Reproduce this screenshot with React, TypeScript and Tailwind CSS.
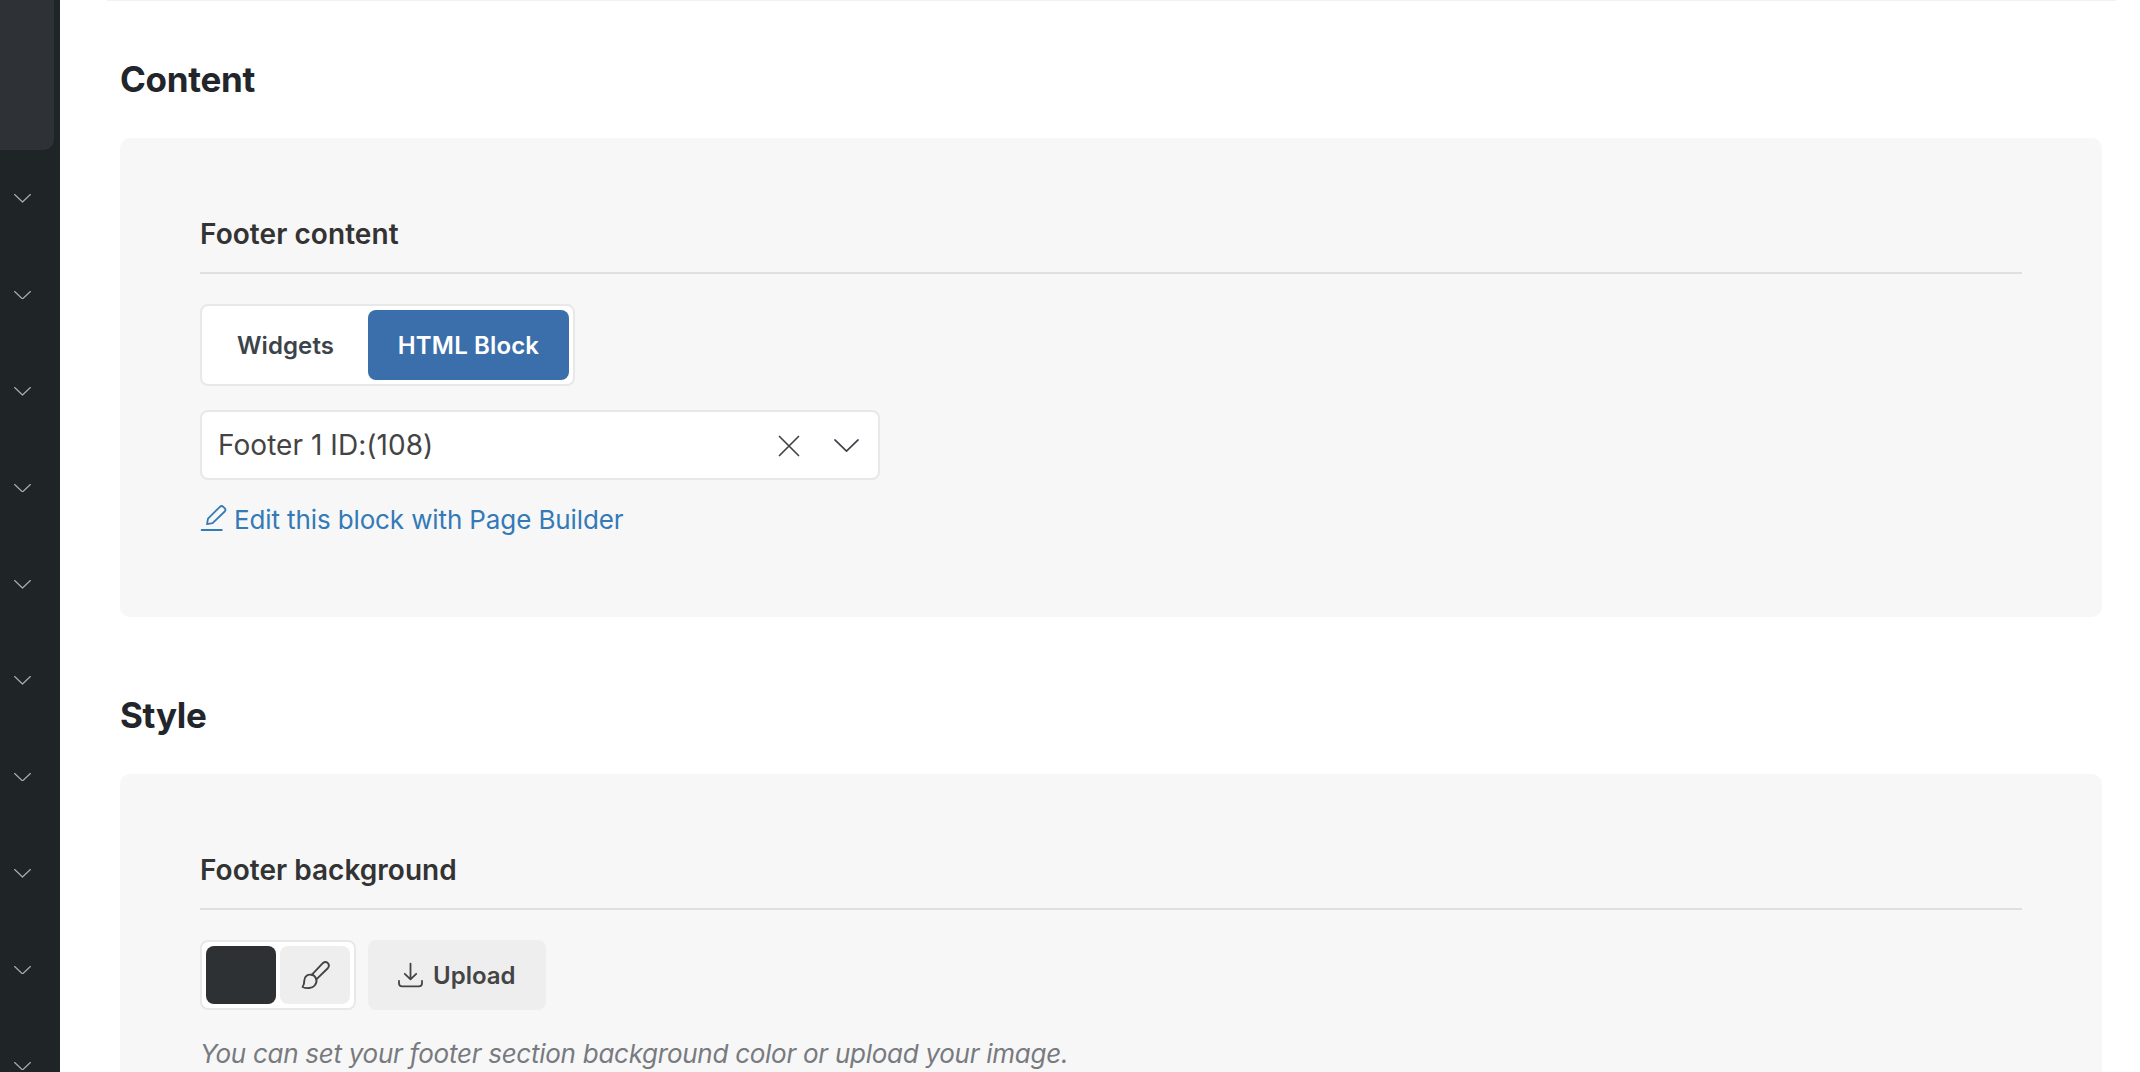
import { useState } from "react";

const menuItems = Array.from({ length: 10 }, (_, i) => i);

const Chevron = ({ className }: { className: string }) => (
  <svg viewBox="0 0 24 12" fill="none" stroke="currentColor" className={className}>
    <path d="M0.9 0.7 L12 11.3 L23.1 0.7" strokeLinejoin="round" strokeLinecap="round" vectorEffect="non-scaling-stroke" />
  </svg>
);

const PenIcon = () => (
  <svg width="27" height="28" viewBox="0 0 27 28" fill="none" stroke="currentColor" strokeWidth="1.8" strokeLinejoin="round" strokeLinecap="round">
    <path d="M7 20.2 L8 14.6 L19.9 2.8 Q21.6 1.2 23.3 2.8 L24.8 4.3 Q26.2 5.9 24.7 7.5 L12.6 19.2 Z" />
    <path d="M1.6 26 H21.8" />
  </svg>
);

const BrushIcon = () => (
  <svg width="30" height="30" viewBox="0 0 30 30" fill="none" stroke="currentColor" strokeWidth="1.9" strokeLinejoin="round" strokeLinecap="round">
    <path d="M11.7 14.8 L22.8 3.2 Q25.4 0.9 27.9 3.1 Q30 5.6 27.8 8.2 L16.3 19.4" />
    <path d="M11.7 14.8 C7.8 14 4.4 16.4 4.3 20.4 C4.3 23.2 4.1 24.8 2.6 27 C6.6 28.9 12.2 28.4 14.7 25.5 C16.4 23.5 16.9 21.3 16.3 19.4 C15.6 17.1 13.9 15.2 11.7 14.8 Z" />
  </svg>
);

const DownloadIcon = () => (
  <svg width="26" height="26" viewBox="0 0 26 26" fill="none" stroke="currentColor" strokeWidth="1.8" strokeLinejoin="round" strokeLinecap="round">
    <path d="M13.5 1.6 V17.2 M7.8 11.8 L13.5 17.4 L19.2 11.8" />
    <path d="M2 18.8 V21.2 Q2 24.4 5.2 24.4 H21.8 Q25 24.4 25 21.2 V18.8" />
  </svg>
);

const Sidebar = () => (
  <aside className="w-[60px] h-full shrink-0 bg-[#1f2427] overflow-hidden">
    <div className="w-[54px] h-[150px] rounded-br-[10px] bg-[#2e3236]" />
    <ul className="pt-[0.5px] text-[#a9acae]">
      {menuItems.map((item) => (
        <li key={item} className="h-[96.4px] flex items-center pl-3.5">
          <Chevron className="w-[17px] h-[8.5px] stroke-[1.2px]" />
        </li>
      ))}
    </ul>
  </aside>
);

const App = () => {
  const [source, setSource] = useState("html");

  return (
    <div className="flex h-[1072px] w-full overflow-hidden bg-white font-['Inter',sans-serif]">
      <Sidebar />
      <main className="flex-1 min-w-0">
        <div className="h-px ml-[47px] mr-6 bg-[#edf2f7]" />

        <div className="pl-[60px] pr-[38px]">
          <h2 className="h-[137px] pt-[57px] text-[35px] leading-[42px] font-[650] tracking-[-0.3px] text-[#22262b]">Content</h2>
          <section className="h-[479px] rounded-[10px] bg-[#f7f7f7] px-20 pt-[78px]">
            <h3 className="h-[58px] border-b-2 border-[#e0e0e0] text-[28px] leading-9 font-semibold tracking-[0.07px] text-[#333]">Footer content</h3>

            <div className="mt-[30px] flex w-[375px] h-[82px] items-center justify-between rounded-lg border-2 border-[#e8e8e8] bg-white p-1">
              <button onClick={() => setSource("widgets")} className="flex-1 pt-0.5 pr-[3px] text-[24px] font-semibold tracking-[0.1px] text-[#3c434a] cursor-pointer">Widgets</button>
              <button onClick={() => setSource("html")} className={`w-[201px] h-[70px] pt-0.5 rounded-lg text-[24px] font-semibold tracking-[0.15px] cursor-pointer ${source === "html" ? "bg-[#3b6fab] text-white" : "text-[#3c434a]"}`}>HTML Block</button>
            </div>

            <div className="mt-6 flex w-[680px] h-[70px] items-center rounded-lg border-2 border-[#e8e8e8] bg-white pl-4 pr-[19px] text-[#444]">
              <span className="flex-1 text-[28px] tracking-[0.05px]">Footer 1 ID:(108)</span>
              <svg width="22" height="22" viewBox="0 0 22 22" fill="none" stroke="currentColor" strokeWidth="1.7" strokeLinecap="round" className="mt-px mr-[34px]">
                <path d="M1.5 1.5 L20.5 20.5 M20.5 1.5 L1.5 20.5" />
              </svg>
              <Chevron className="mt-px w-[25px] h-[13px] text-[#3c434a] stroke-[1.7px]" />
            </div>

            <a href="#" className="mt-[22px] flex w-max items-start text-[26px] leading-9 tracking-[-0.12px] text-[#337ab7]">
              <span className="mt-0.5"><PenIcon /></span>
              <span className="ml-[7px]">Edit this block with Page Builder</span>
            </a>
          </section>

          <h2 className="h-[157px] pt-[77px] text-[35px] leading-[42px] font-[650] tracking-[-0.3px] text-[#22262b]">Style</h2>
          <section className="h-[479px] rounded-[10px] bg-[#f7f7f7] px-20 pt-[78px]">
            <h3 className="h-[58px] border-b-2 border-[#e0e0e0] text-[28px] leading-9 font-semibold tracking-[0.03px] text-[#333]">Footer background</h3>

            <div className="mt-[30px] flex gap-3">
              <div className="flex h-[70px] w-[156px] gap-1 rounded-lg border-2 border-[#e8e8e8] bg-white p-1">
                <div className="flex-1 rounded-lg bg-[#2d3134]" />
                <button className="flex flex-1 items-center justify-center rounded-lg bg-[#eee] text-[#444] cursor-pointer">
                  <BrushIcon />
                </button>
              </div>
              <button className="flex h-[70px] w-[178px] items-center rounded-lg bg-[#eee] pl-[29px] text-[24px] font-semibold text-[#444] cursor-pointer">
                <DownloadIcon />
                <span className="ml-2.5 pt-0.5">Upload</span>
              </button>
            </div>

            <p className="mt-[26px] text-[26px] leading-9 italic tracking-[-0.27px] text-[#777b80]">
              You can set your footer section background color or upload your image.
            </p>
          </section>
        </div>
      </main>
    </div>
  );
};

export default App;
